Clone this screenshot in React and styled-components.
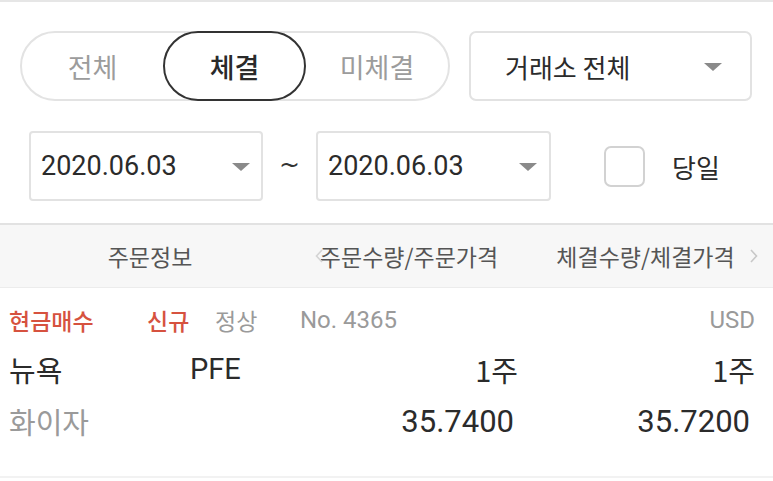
import React from "react";
import styled, { createGlobalStyle } from "styled-components";

const Global = createGlobalStyle`
  html, body { margin: 0; padding: 0; background: #fff; }
  body { font-family: Roboto, "Noto Sans CJK KR", sans-serif; }
  * { box-sizing: border-box; }
`;

const LATIN = `Roboto, "Noto Sans CJK KR", sans-serif`;
const KR = `"Noto Sans CJK KR", sans-serif`;

const Page = styled.div`
  width: 773px;
  height: 481px;
  overflow: hidden;
  border-top: 2px solid #e6e6e6;
  background: #fff;
  font-family: ${KR};
`;

const Filters = styled.div`
  padding: 29px 21px 0 20px;
  display: flex;
  flex-direction: column;
  gap: 30px;
`;

const FilterRow = styled.div`
  display: flex;
  align-items: center;
  height: 70px;
  padding-left: ${(p) => p.$indent || 0}px;
`;

const SegWrap = styled.div`
  width: 430px;
  height: 70px;
  border: 2px solid #e3e3e3;
  border-radius: 35px;
  display: flex;
  align-items: stretch;
`;

const Seg = styled.div`
  flex: 0 0 ${(p) => p.$w}px;
  display: flex;
  align-items: center;
  justify-content: center;
  margin: -2px 0;
  font-family: ${KR};
  font-size: 27px;
  font-weight: ${(p) => (p.$active ? 500 : 400)};
  color: ${(p) => (p.$active ? "#2a2a2a" : "#9c9c9c")};
  border: 2px solid ${(p) => (p.$active ? "#333" : "transparent")};
  border-radius: 35px;
`;

const Select = styled.div`
  margin-left: ${(p) => p.$ml || 0}px;
  width: ${(p) => p.$w}px;
  height: 70px;
  border: 2px solid #e2e2e2;
  border-radius: ${(p) => p.$r || 4}px;
  display: flex;
  align-items: center;
  justify-content: space-between;
  padding: 0 ${(p) => p.$pr}px 0 ${(p) => p.$pl}px;
  font-family: ${(p) => (p.$latin ? LATIN : KR)};
  font-size: ${(p) => p.$fs}px;
  color: #2b2b2b;
`;

const Caret = styled.span`
  width: 0;
  height: 0;
  border-left: 9.5px solid transparent;
  border-right: 9.5px solid transparent;
  border-top: 8px solid #8a8a8a;
  margin-top: 2px;
`;

const Tilde = styled.span`
  width: 53px;
  text-align: center;
  font-size: 25px;
  color: #333;
  font-family: "DejaVu Sans", sans-serif;
  margin-top: -3px;
`;

const Check = styled.div`
  margin-left: 53px;
  width: 41px;
  height: 41px;
  border: 2px solid #d2d2d2;
  border-radius: 7px;
`;

const CheckLabel = styled.span`
  margin-left: 27px;
  font-family: ${KR};
  font-size: 26px;
  color: #2b2b2b;
`;

const Header = styled.div`
  margin-top: 22px;
  height: 65px;
  background: #f7f7f7;
  border-top: 2px solid #e2e2e2;
  border-bottom: 1px solid #ececec;
  display: grid;
  grid-template-columns: 300px 218px 1fr;
  align-items: center;
  font-family: ${KR};
  font-size: 23px;
  color: #555;
  position: relative;
`;

const HCell = styled.div`
  text-align: center;
`;

const Chevron = styled.svg`
  position: absolute;
  top: 50%;
  margin-top: -7px;
  ${(p) => (p.$side === "left" ? "left: 315px;" : "right: 15px;")}
`;

const Body = styled.div`
  padding: 9px 18px 0 9px;
  display: flex;
  flex-direction: column;
  height: 190px;
  border-bottom: 2px solid #f2f2f2;
`;

const MetaRow = styled.div`
  display: flex;
  align-items: center;
  height: 46px;
  font-size: 23px;
`;

const Meta = styled.span`
  flex: ${(p) => (p.$w ? `0 0 ${p.$w}px` : "0 0 auto")};
  color: ${(p) => (p.$red ? "#d6523f" : "#9a9a9a")};
  font-weight: ${(p) => (p.$red ? 500 : 400)};
  font-family: ${(p) => (p.$latin ? LATIN : KR)};
  font-size: ${(p) => (p.$latin ? 24 : 23)}px;
  ${(p) => (p.$push ? "margin-left: auto;" : "")}
`;

const DataRow = styled.div`
  display: grid;
  grid-template-columns: 181px 91px 237px 1fr;
  align-items: center;
  height: ${(p) => p.$h}px;
  font-size: 29px;
`;

const Cell = styled.div`
  text-align: ${(p) => (p.$right ? "right" : "left")};
  color: ${(p) => (p.$muted ? "#9a9a9a" : "#2b2b2b")};
  padding-right: ${(p) => p.$pr || 0}px;
  font-family: ${(p) => (p.$latin ? LATIN : KR)};
  font-size: ${(p) => p.$fs || 29}px;
  white-space: nowrap;
`;

export default function App() {
  return (
    <>
      <Global />
      <Page>
        <Filters>
          <FilterRow>
            <SegWrap>
              <Seg $w={141}>전체</Seg>
              <Seg $w={143} $active>체결</Seg>
              <Seg $w={142}>미체결</Seg>
            </SegWrap>
            <Select $ml={19} $w={283} $pl={34} $pr={28} $fs={26} $r={7}>
              <span>거래소 전체</span>
              <Caret />
            </Select>
          </FilterRow>
          <FilterRow $indent={9}>
            <Select $w={234} $pl={10} $pr={11} $fs={27} $latin>
              <span>2020.06.03</span>
              <Caret />
            </Select>
            <Tilde>~</Tilde>
            <Select $w={235} $pl={10} $pr={12} $fs={27} $latin>
              <span>2020.06.03</span>
              <Caret />
            </Select>
            <Check />
            <CheckLabel>당일</CheckLabel>
          </FilterRow>
        </Filters>
        <Header>
          <HCell>주문정보</HCell>
          <HCell>주문수량/주문가격</HCell>
          <HCell>체결수량/체결가격</HCell>
          <Chevron $side="left" width="8" height="14" viewBox="0 0 8 14">
            <path d="M7 1 L1.5 7 L7 13" fill="none" stroke="#d4d4d4" strokeWidth="1.6" />
          </Chevron>
          <Chevron $side="right" width="8" height="14" viewBox="0 0 8 14">
            <path d="M1 1 L6.5 7 L1 13" fill="none" stroke="#c8c8c8" strokeWidth="1.6" />
          </Chevron>
        </Header>
        <Body>
          <MetaRow>
            <Meta $red $w={138}>현금매수</Meta>
            <Meta $red $w={68}>신규</Meta>
            <Meta $w={85}>정상</Meta>
            <Meta $latin>No. 4365</Meta>
            <Meta $push $latin>USD</Meta>
          </MetaRow>
          <DataRow $h={52}>
            <Cell>뉴욕</Cell>
            <Cell $latin>PFE</Cell>
            <Cell $right>1주</Cell>
            <Cell $right>1주</Cell>
          </DataRow>
          <DataRow $h={52}>
            <Cell $muted>화이자</Cell>
            <Cell />
            <Cell $right $latin $fs={31} $pr={4}>35.7400</Cell>
            <Cell $right $latin $fs={31} $pr={5}>35.7200</Cell>
          </DataRow>
        </Body>
      </Page>
    </>
  );
}
